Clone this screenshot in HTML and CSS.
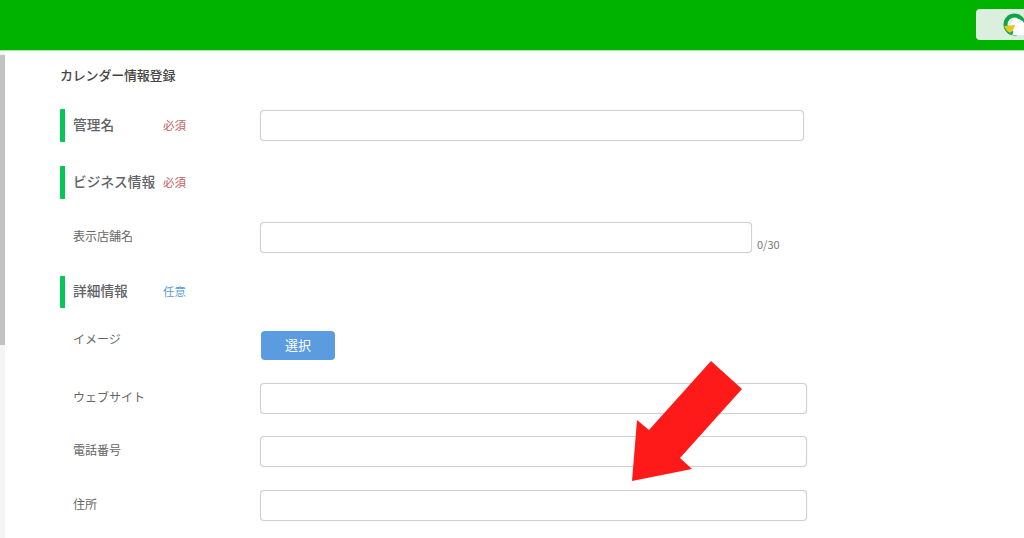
FILE: index.html
```html
<!DOCTYPE html>
<html lang="ja">
<head>
  <meta charset="UTF-8">
  <title>カレンダー情報登録</title>
  <link rel="stylesheet" href="styles.css">
</head>
<body>

  <header class="topbar">
    <div class="account-btn">
      <svg class="account-icon" width="24" height="24" viewBox="0 0 24 24">
        <circle cx="11.5" cy="11.5" r="11" fill="#0fa34a"/>
        <circle cx="11.5" cy="11.5" r="7" fill="#e4f3e7"/>
        <path d="M8 13 Q8 6 13 6 Q19 6 21 10 L21 22 L9 22 Q12 18 8 13 Z" fill="#fff"/>
        <path d="M1 13 L12 12 Q11 17 7 20 Q3 18 1 13 Z" fill="#e6c620"/>
      </svg>
    </div>
  </header>

  <div class="page">
    <div class="rail"><div class="rail-thumb"></div></div>

    <main class="content">
      <h1 class="page-title">カレンダー情報登録</h1>

      <div class="row row-name">
        <div class="section-label">管理名</div>
        <span class="tag tag-required">必須</span>
        <input class="field field-name" type="text">
      </div>

      <div class="row row-business">
        <div class="section-label">ビジネス情報</div>
        <span class="tag tag-required">必須</span>
      </div>

      <div class="row row-shop">
        <div class="field-label">表示店舗名</div>
        <input class="field field-shop" type="text">
        <span class="counter">0/30</span>
      </div>

      <div class="row row-detail">
        <div class="section-label">詳細情報</div>
        <span class="tag tag-optional">任意</span>
      </div>

      <div class="row row-image">
        <div class="field-label">イメージ</div>
        <button class="select-btn" type="button">選択</button>
      </div>

      <div class="row row-input">
        <div class="field-label">ウェブサイト</div>
        <input class="field" type="text">
      </div>

      <div class="row row-input">
        <div class="field-label">電話番号</div>
        <input class="field" type="text">
      </div>

      <div class="row row-input row-last">
        <div class="field-label">住所</div>
        <input class="field" type="text">
      </div>
    </main>
  </div>

  <svg class="arrow" width="1024" height="538" viewBox="0 0 1024 538">
    <polygon points="711,361 742,389 680,458 692,469 632,481 637,420 649,430" fill="#ff1a1a"/>
  </svg>

</body>
</html>
```

FILE: styles.css
```css
* {
  box-sizing: border-box;
}

html, body {
  height: 100%;
}

body {
  margin: 0;
  background: #fff;
  color: #555;
  font-family: "Noto Sans CJK JP", "Noto Sans", sans-serif;
  overflow: hidden;
  position: relative;
}

.topbar {
  height: 51px;
  background: #00b300;
  border-bottom: 1px solid #a5e6a5;
  padding: 9px 0 0 976px;
}

.account-btn {
  width: 60px;
  height: 31px;
  background: #dbefdf;
  border-radius: 4px;
  padding: 4px 0 0 27px;
}

.account-icon {
  display: block;
}

.page {
  display: flex;
}

.rail {
  width: 5px;
  height: 487px;
  background: #f4f4f4;
  padding-top: 4px;
}

.rail-thumb {
  height: 290px;
  background: #c1c1c1;
}

.content {
  padding-left: 55px;
  flex: 1;
}

.page-title {
  margin: 14px 0 0;
  height: 20px;
  line-height: 20px;
  font-size: 13px;
  font-weight: 500;
  letter-spacing: -0.2px;
  color: #444;
}

.row {
  display: flex;
  align-items: center;
}

.section-label {
  width: 103px;
  height: 33px;
  line-height: 31px;
  border-left: 5px solid #06c755;
  border-radius: 1px;
  padding-left: 8px;
  font-size: 13.7px;
  font-weight: 500;
  color: #5f6368;
  white-space: nowrap;
}

.tag {
  width: 97px;
  margin-bottom: 2px;
  font-size: 11.5px;
}

.tag-required {
  color: #c0605f;
}

.tag-optional {
  color: #5b9bd5;
}

.field-label {
  width: 200px;
  padding-left: 13px;
  margin-bottom: 5px;
  font-size: 12px;
  color: #666;
}

.field {
  width: 547px;
  height: 31px;
  background: #fff;
  border: 1px solid #d0d0d0;
  box-shadow: 0 0 1px #d0d0d0;
  border-radius: 4px;
  padding: 0 8px;
}

.row-name {
  margin-top: 24px;
}

.field-name {
  width: 544px;
}

.row-business {
  margin-top: 24px;
}

.row-shop {
  margin-top: 23px;
}

.field-shop {
  width: 492px;
}

.counter {
  align-self: flex-end;
  margin-left: 5px;
  margin-bottom: 2px;
  font-size: 11px;
  color: #777;
  line-height: 14px;
}

.row-detail {
  margin-top: 23px;
}

.row-detail .section-label {
  height: 32px;
  line-height: 29px;
}

.row-image {
  margin-top: 23px;
  align-items: flex-start;
}

.row-image .field-label {
  line-height: 16px;
  margin-bottom: 0;
}

.select-btn {
  width: 74px;
  height: 29px;
  margin-left: 1px;
  padding: 0 0 3px;
  background: #5b9bdf;
  color: #fff;
  border: none;
  border-radius: 4px;
  font-family: inherit;
  font-size: 13px;
}

.row-input {
  margin-top: 22px;
}

.row-image + .row-input {
  margin-top: 23px;
}

.row-last {
  margin-top: 23px;
}

.arrow {
  position: absolute;
  left: 0;
  top: 0;
  pointer-events: none;
}
```
